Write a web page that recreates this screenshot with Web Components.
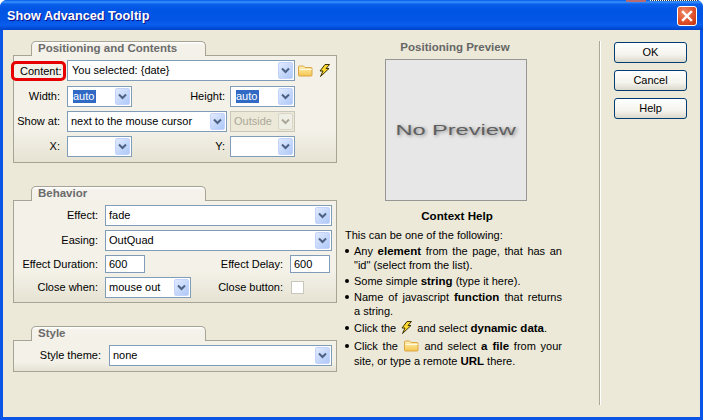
<!DOCTYPE html>
<html><head><meta charset="utf-8"><style>
html,body{margin:0;padding:0;background:#fff}
body{width:703px;height:420px;overflow:hidden;font:11px/13px "Liberation Sans",Tahoma,sans-serif;color:#000}
</style></head><body>
<xp-dialog title-text="Show Advanced Tooltip">
  <xp-col slot="left">
    <xp-group label="Positioning and Contents" columns="50px 65px 92px 65px" rows="22px 21px 21px 21px" style="height:122px">
      <xp-label><xp-mark>Content:</xp-mark></xp-label>
      <div style="grid-column:2/5;align-self:start;display:flex;align-items:center">
        <xp-select value="You selected: {date}" indent="3" style="width:228px;flex:none"></xp-select>
        <xp-folder style="margin-left:3px;flex:none"></xp-folder><xp-bolt style="margin-left:6px;flex:none"></xp-bolt>
      </div>
      <xp-label>Width:</xp-label><xp-select value="auto" selected></xp-select>
      <xp-label style="padding-right:2px">Height:</xp-label><xp-select value="auto" selected></xp-select>
      <xp-label>Show at:</xp-label>
      <div style="grid-column:2/5;display:flex;gap:3px"><xp-select value="next to the mouse cursor" style="width:160px;flex:none"></xp-select><xp-select value="Outside" disabled style="width:65px;flex:none"></xp-select></div>
      <xp-label>X:</xp-label><xp-select value=""></xp-select>
      <xp-label style="padding-right:2px">Y:</xp-label><xp-select value=""></xp-select>
    </xp-group>
    <xp-group label="Behavior" columns="88px 40px 139px 40px" rows="21px 21px 18px 21px" style="height:117px">
      <xp-label>Effect:</xp-label><xp-select value="fade" style="grid-column:2/5;width:227px"></xp-select>
      <xp-label>Easing:</xp-label><xp-select value="OutQuad" style="grid-column:2/5;width:227px"></xp-select>
      <xp-label>Effect Duration:</xp-label><xp-input value="600"></xp-input><xp-label>Effect Delay:</xp-label><xp-input value="600"></xp-input>
      <xp-label>Close when:</xp-label><xp-select value="mouse out" style="width:86px"></xp-select><xp-label>Close button:</xp-label><xp-check></xp-check>
    </xp-group>
    <xp-group label="Style" columns="92px 223px" rows="21px" style="height:46px">
      <xp-label style="padding-right:5px">Style theme:</xp-label><xp-select value="none"></xp-select>
    </xp-group>
  </xp-col>
  <xp-preview slot="middle"></xp-preview>
  <xp-help slot="middle"></xp-help>
  <xp-button slot="right">OK</xp-button>
  <xp-button slot="right">Cancel</xp-button>
  <xp-button slot="right">Help</xp-button>
</xp-dialog>
<script>
function def(name,css,html){
  customElements.define(name,class extends HTMLElement{
    connectedCallback(){
      if(this.shadowRoot)return;
      const r=this.attachShadow({mode:'open'});
      r.innerHTML='<style>'+css+'</style>'+(typeof html==='function'?html(this):html);
    }
  });
}
const esc=s=>String(s||'').replace(/&/g,'&amp;').replace(/</g,'&lt;');
let fid=0;
def('xp-dialog',`
:host{display:flex;flex-direction:column;position:relative;width:703px;height:420px;box-sizing:border-box;background:#0a55e6;border-radius:7px 7px 0 0;overflow:hidden}
.tb{height:30px;flex:none;display:flex;align-items:center;justify-content:space-between;padding:1px 6px 0 7px;box-sizing:border-box;
background:linear-gradient(#0058e6 0,#3a93ff 2px,#0a60ea 4px,#0055e5 9px,#0355e6 20px,#0a5fee 25px,#0047d0 29px,#0043c8 30px)}
.t{font:bold 12.700px/16px "Liberation Sans",sans-serif;color:#fff;text-shadow:1px 1px 0 #0f1089}
.x{width:20px;height:20px;box-sizing:border-box;border:1px solid #fff;border-radius:3px;background:radial-gradient(circle at 35% 30%,#ef8a68,#e0502a 55%,#c0310f);display:block}
.top1{position:absolute;left:626px;top:0;width:20px;height:2px;background:#b46c72}
.top2{position:absolute;left:650px;top:0;width:48px;height:1px;background:repeating-linear-gradient(90deg,#fff 0 1px,#333 1px 2px)}
.body{flex:1;display:flex;margin:0 3px 3px 3px;background:#ece9d8;min-height:0}
.l{width:334px;padding:11px 0 0 10px;flex:none;box-sizing:border-box}
.m{width:262px;padding-top:11px;flex:none;box-sizing:border-box;display:flex;flex-direction:column;align-items:flex-start}
.sep{width:2px;background:linear-gradient(90deg,#aca899 50%,#fff 50%);margin:11px 0 12px 0;flex:none}
.r{padding:12px 0 0 13px;display:flex;flex-direction:column;gap:7px}
`,h=>`<div class="tb"><span class="t">${esc(h.getAttribute('title-text'))}</span><svg class="x" viewBox="0 0 18 18"><path d="M5 5l8 8M13 5l-8 8" stroke="#fff" stroke-width="2.400" stroke-linecap="square"/></svg></div><i class="top1"></i><i class="top2"></i>
<div class="body"><div class="l"><slot name="left"></slot></div><div class="m"><slot name="middle"></slot></div><div class="sep"></div><div class="r"><slot name="right"></slot></div></div>`);
def('xp-col',`:host{display:flex;flex-direction:column}`,`<slot></slot>`);
def('xp-group',`
:host{display:block;margin-bottom:23px}
.tab{margin-left:18px;width:175px;height:15px;box-sizing:border-box;border:1px solid #a5a497;border-bottom:0;border-radius:5px 5px 0 0;background:linear-gradient(#fff,#f4f2ea 3px,#f3f1e8);font:bold 11.500px/13px "Liberation Sans",sans-serif;color:#6b6b6b;padding-left:6px;position:relative;z-index:1;margin-bottom:-1px}
.panel{border:1px solid #a5a497;height:calc(100% - 14px);box-sizing:border-box;background:linear-gradient(#f3f1e8 70%,#e6e3d3);display:grid;padding:4px 0 0 0;gap:4px 3px;align-content:start;align-items:center}
`,h=>`<div class="tab">${esc(h.getAttribute('label'))}</div><div class="panel" style="grid-template-columns:${h.getAttribute('columns')};grid-template-rows:${h.getAttribute('rows')}"><slot></slot></div>`);
def('xp-label',`:host{display:block;text-align:right;white-space:nowrap;padding-right:4px}`,`<slot></slot>`);
def('xp-mark',`:host{display:inline-block;line-height:14px;padding:0 1px 0 6px;outline:3px solid #e60000;border-radius:2px;margin-right:-1px}`,`<slot></slot>`);
def('xp-select',`
:host{display:flex;height:21px;box-sizing:border-box;border:1px solid #7f9db9;background:#fff;align-items:center;justify-content:space-between;padding:1px;white-space:nowrap;overflow:hidden}
:host([disabled]){background:#ece9d8;border-color:#c9c7ba;color:#aca899}
.v{padding-left:var(--i,2px)}
.sel{background:#316ac5;color:#fff;padding:0 2px 0 0;display:inline-block}
.b{width:15px;height:17px;flex:none;border-radius:2px;background:linear-gradient(135deg,#e1eafe,#aec8f7);border:1px solid #c3d3fb;box-sizing:border-box;display:flex;align-items:center;justify-content:center}
:host([disabled]) .b{background:#f0efe6;border-color:#d8d6c8}
svg{display:block}
`,h=>{const v=esc(h.getAttribute('value'));const i=h.hasAttribute('selected')?4:(h.getAttribute('indent')||2);
return `<span class="v" style="--i:${i}px">${h.hasAttribute('selected')?`<span class="sel">${v}</span>`:v}</span><span class="b"><svg width="9" height="7" viewBox="0 0 9 7"><path d="M1 1.500l3.500 3.500 3.500-3.500" fill="none" stroke="${h.hasAttribute('disabled')?'#aca899':'#4d6185'}" stroke-width="2"/></svg></span>`});
def('xp-input',`:host{display:flex;align-items:center;height:18px;box-sizing:border-box;border:1px solid #7f9db9;background:#fff;padding-left:3px}`,h=>esc(h.getAttribute('value')));
def('xp-check',`:host{display:block;width:13px;height:13px;box-sizing:border-box;border:1px solid #c9c7ba;background:#fff;margin-left:1px}`,``);
def('xp-folder',`:host{display:inline-block;line-height:0}`,()=>{const id='f'+(++fid);return `<svg width="15" height="12" viewBox="0 0 15 12"><defs><linearGradient id="${id}" x1="0" y1="0" x2="0" y2="1"><stop offset="0" stop-color="#fff1b8"/><stop offset="1" stop-color="#f5c64e"/></linearGradient></defs><path d="M.5 2q0-1 1-1h4l1.500 1.500h6q1 0 1 1v6.500q0 1-1 1h-11.500q-1 0-1-1z" fill="url(#${id})" stroke="#dca544"/><path d="M1.500 4.500h12" stroke="#fff8dc"/></svg>`});
def('xp-bolt',`:host{display:inline-block;line-height:0}`,`<svg width="11" height="13" viewBox="0 0 11 13"><path d="M6 .5h4.500L7 4.500h3L1.500 12.500 4 7H1z" fill="#ffd92e" stroke="#3d3200" stroke-width="1"/></svg>`);
def('xp-preview',`
:host{display:block;width:142px;margin-left:48px;text-align:center}
.t{font:bold 11.500px/13px "Liberation Sans",sans-serif;color:#666;margin:0 -29px 5px -31px;height:13px}
.box{width:142px;height:142px;box-sizing:border-box;border:1px solid #969696;background:#e7e7e7;display:flex;align-items:center;justify-content:center}
.n{display:inline-block;font:15.500px "Liberation Sans",sans-serif;color:#5f5f5f;text-shadow:1px 1px 3px #888;white-space:nowrap;transform:scaleX(1.520)}
`,`<div class="t">Positioning Preview</div><div class="box"><span class="n">No Preview</span></div>`);
def('xp-help',`
:host{display:block;width:217px;margin-left:8px}
h4{font:bold 11.600px/13px "Liberation Sans",sans-serif;margin:8px 0 7px;text-align:center;padding-left:7px}
p{margin:0 0 2px}
ul{list-style:none;margin:0;padding:0}
li{position:relative;padding-left:9px;line-height:14px;margin-bottom:2px;text-align:justify}
li:before{content:"";position:absolute;left:0;top:5px;width:4px;height:4px;border-radius:50%;background:#000}
li.d{margin-top:3px}
li.e{margin-top:4px;line-height:15px}
b{font-size:11.500px}
xp-bolt{vertical-align:-2px;margin:0 2px}
xp-folder{vertical-align:-2px;margin:0 1px}
`,`<h4>Context Help</h4><p>This can be one of the following:</p><ul>
<li>Any <b>element</b> from the page, that has an "id" (select from the list).</li>
<li>Some simple <b>string</b> (type it here).</li>
<li>Name of javascript <b>function</b> that returns a&nbsp;string.</li>
<li class="d">Click the <xp-bolt></xp-bolt> and select <b>dynamic data</b>.</li>
<li class="e">Click the <xp-folder></xp-folder> and select <b>a file</b> from your site, or type a remote <b>URL</b> there.</li>
</ul>`);
def('xp-button',`:host{display:flex;align-items:center;justify-content:center;width:73px;height:21px;box-sizing:border-box;border:1px solid #003c74;border-radius:3px;background:linear-gradient(#fff,#f5f4ee 60%,#dcd8cc)}`,`<slot></slot>`);
</script></body></html>
